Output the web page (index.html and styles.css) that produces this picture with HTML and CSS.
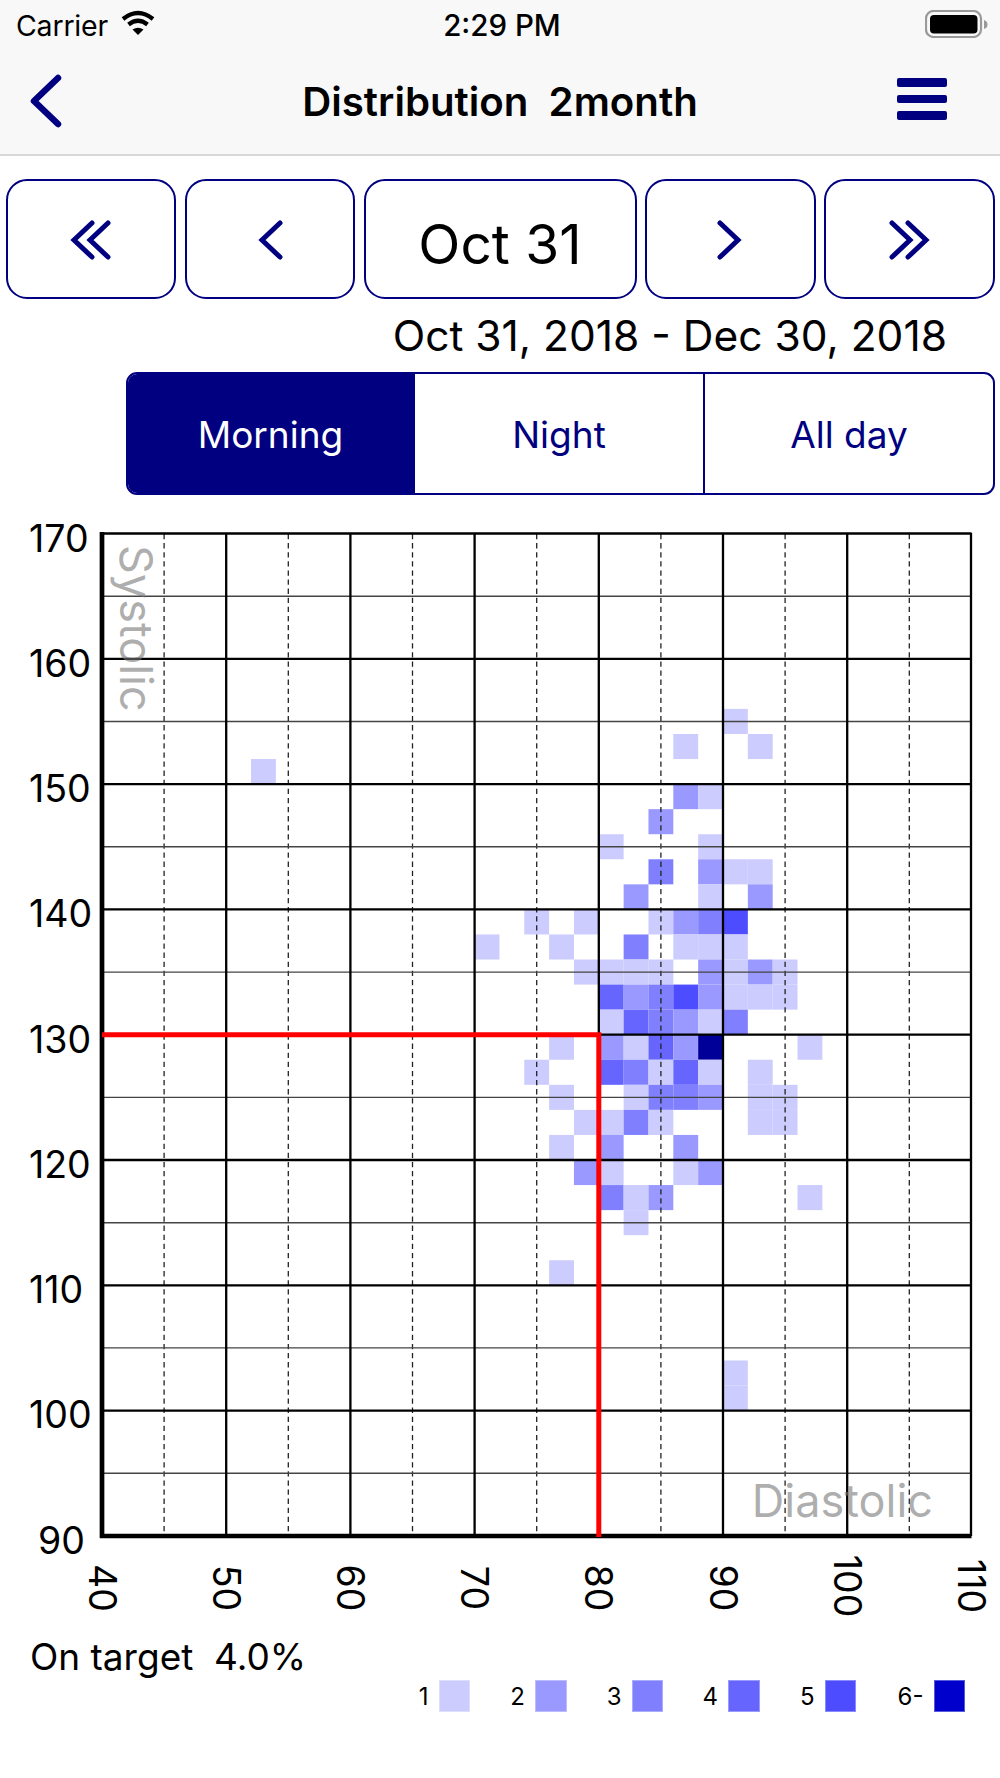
FILE: index.html
```html
<!DOCTYPE html>
<html lang="en">
<head>
<meta charset="utf-8">
<title>Distribution 2month</title>
<link rel="stylesheet" href="styles.css">
</head>
<body>
<header class="top">
  <div class="status">
    <div class="status-left">
      <span class="carrier">Carrier</span>
      <svg class="wifi" viewBox="0 0 36 26" width="36" height="26"><path class="wifi-band" d="M3 9Q18-3 33 9"/><path class="wifi-band" d="M8.5 14.5Q18 7 27.5 14.5"/><path class="wifi-fill" d="M12.5 19.5Q18 16 23.5 19.5L18 25Z"/></svg>
    </div>
    <span class="time">2:29 PM</span>
    <div class="status-right">
      <svg class="battery" viewBox="0 0 64 28" width="64" height="28"><rect class="batt-shell" x="1" y="1" width="55" height="26" rx="7.5"/><rect x="5" y="5" width="47.500" height="18.500" rx="4"/><path class="batt-nub" d="M59 10q3.500 1 3.500 4.500T59 19Z"/></svg>
    </div>
  </div>
  <nav class="nav">
    <svg class="back" viewBox="0 0 36 56" width="36" height="56"><path class="chev-lg" d="M29 5 5 28l24 23"/></svg>
    <h1 class="title">Distribution  2month</h1>
    <div class="menu"><span></span><span></span><span></span></div>
  </nav>
</header>

<div class="pager">
  <button class="pg"><svg viewBox="0 0 44 44" width="44" height="44"><path class="chev" d="M23 5 5 22l18 17M39 5 21 22l18 17"/></svg></button>
  <button class="pg"><svg viewBox="0 0 26 44" width="26" height="44"><path class="chev" d="M23 5 5 22l18 17"/></svg></button>
  <button class="pg pg-date">Oct 31</button>
  <button class="pg"><svg viewBox="0 0 26 44" width="26" height="44"><path class="chev" d="m3 5 18 17L3 39"/></svg></button>
  <button class="pg"><svg viewBox="0 0 44 44" width="44" height="44"><path class="chev" d="m5 5 18 17L5 39M21 5l18 17-18 17"/></svg></button>
</div>

<p class="range">Oct 31, 2018 - Dec 30, 2018</p>

<div class="segments">
  <div class="seg seg-on">Morning</div>
  <div class="seg">Night</div>
  <div class="seg seg-last">All day</div>
</div>

<svg class="chart" viewBox="0 510 1000 1125" width="1000" height="1125">
  <g transform="translate(102 533.5) scale(12.42 12.53)">
    <rect class="c1" x="50" y="14"/>
    <rect class="c1" x="46" y="16"/><rect class="c1" x="52" y="16"/>
    <rect class="c1" x="12" y="18"/>
    <rect class="c2" x="46" y="20"/><rect class="c1" x="48" y="20"/>
    <rect class="c2" x="44" y="22"/>
    <rect class="c1" x="40" y="24"/><rect class="c1" x="48" y="24"/>
    <rect class="c3" x="44" y="26"/><rect class="c2" x="48" y="26"/><rect class="c1" x="50" y="26"/><rect class="c1" x="52" y="26"/>
    <rect class="c2" x="42" y="28"/><rect class="c1" x="48" y="28"/><rect class="c2" x="52" y="28"/>
    <rect class="c1" x="34" y="30"/><rect class="c1" x="38" y="30"/><rect class="c1" x="44" y="30"/><rect class="c2" x="46" y="30"/><rect class="c3" x="48" y="30"/><rect class="c5" x="50" y="30"/>
    <rect class="c1" x="30" y="32"/><rect class="c1" x="36" y="32"/><rect class="c3" x="42" y="32"/><rect class="c1" x="46" y="32"/><rect class="c1" x="48" y="32"/><rect class="c1" x="50" y="32"/>
    <rect class="c1" x="38" y="34"/><rect class="c1" x="40" y="34"/><rect class="c1" x="42" y="34"/><rect class="c1" x="44" y="34"/><rect class="c2" x="48" y="34"/><rect class="c1" x="50" y="34"/><rect class="c2" x="52" y="34"/><rect class="c1" x="54" y="34"/>
    <rect class="c4" x="40" y="36"/><rect class="c2" x="42" y="36"/><rect class="c3" x="44" y="36"/><rect class="c5" x="46" y="36"/><rect class="c2" x="48" y="36"/><rect class="c1" x="50" y="36"/><rect class="c1" x="52" y="36"/><rect class="c1" x="54" y="36"/>
    <rect class="c1" x="40" y="38"/><rect class="c4" x="42" y="38"/><rect class="c3" x="44" y="38"/><rect class="c2" x="46" y="38"/><rect class="c1" x="48" y="38"/><rect class="c3" x="50" y="38"/>
    <rect class="c1" x="36" y="40"/><rect class="c2" x="40" y="40"/><rect class="c1" x="42" y="40"/><rect class="c4" x="44" y="40"/><rect class="c2" x="46" y="40"/><rect class="c6" x="48" y="40"/><rect class="c1" x="56" y="40"/>
    <rect class="c1" x="34" y="42"/><rect class="c4" x="40" y="42"/><rect class="c3" x="42" y="42"/><rect class="c1" x="44" y="42"/><rect class="c4" x="46" y="42"/><rect class="c1" x="48" y="42"/><rect class="c1" x="52" y="42"/>
    <rect class="c1" x="36" y="44"/><rect class="c1" x="42" y="44"/><rect class="c3" x="44" y="44"/><rect class="c3" x="46" y="44"/><rect class="c2" x="48" y="44"/><rect class="c1" x="52" y="44"/><rect class="c1" x="54" y="44"/>
    <rect class="c1" x="38" y="46"/><rect class="c1" x="40" y="46"/><rect class="c3" x="42" y="46"/><rect class="c1" x="44" y="46"/><rect class="c1" x="52" y="46"/><rect class="c1" x="54" y="46"/>
    <rect class="c1" x="36" y="48"/><rect class="c2" x="40" y="48"/><rect class="c2" x="46" y="48"/>
    <rect class="c2" x="38" y="50"/><rect class="c1" x="40" y="50"/><rect class="c1" x="46" y="50"/><rect class="c2" x="48" y="50"/>
    <rect class="c3" x="40" y="52"/><rect class="c1" x="42" y="52"/><rect class="c2" x="44" y="52"/><rect class="c1" x="56" y="52"/>
    <rect class="c1" x="42" y="54"/>
    <rect class="c1" x="36" y="58"/>
    <rect class="c1" x="50" y="66"/><rect class="c1" x="50" y="68"/>
  </g>

  <g class="dashed">
    <path d="M164.100 534V1534M288.300 534V1534M412.500 534V1534M536.700 534V1534M660.900 534V1534M785.100 534V1534M909.300 534V1534"/>
  </g>
  <path class="minor" d="M102 596.200H971M102 721.500H971M102 846.800H971M102 972.100H971M102 1097.400H971M102 1222.700H971M102 1347.900H971M102 1473.200H971"/>
  <path class="major" d="M102 533.500H971.500M102 658.800H971M102 784.100H971M102 909.400H971M102 1034.700H971M102 1160H971M102 1285.300H971M102 1410.600H971"/>
  <path class="major" d="M226.200 533V1536M350.400 533V1536M474.600 533V1536M598.800 533V1536M723 533V1536M847.200 533V1536M971 533V1536"/>
  <path class="axis" d="M102 532V1538M100 1536H971.500"/>
  <path class="target" d="M102 1034.700H598.800V1537"/>

  <text class="axis-name" transform="translate(120 545) rotate(90)">Systolic</text>
  <text class="axis-name" x="933" y="1517" text-anchor="end">Diastolic</text>

  <g class="tick">
    <text x="29" y="552">170</text>
    <text x="29" y="677">160</text>
    <text x="29" y="802">150</text>
    <text x="29" y="927">140</text>
    <text x="29" y="1053">130</text>
    <text x="29" y="1178">120</text>
    <text x="29" y="1303">110</text>
    <text x="29" y="1428">100</text>
    <text x="38" y="1554">90</text>
  </g>
  <g class="tick" text-anchor="middle">
    <text transform="translate(102 1588) rotate(90)" y="13.500">40</text>
    <text transform="translate(226.200 1588) rotate(90)" y="13.500">50</text>
    <text transform="translate(350.400 1588) rotate(90)" y="13.500">60</text>
    <text transform="translate(474.600 1588) rotate(90)" y="13.500">70</text>
    <text transform="translate(598.800 1588) rotate(90)" y="13.500">80</text>
    <text transform="translate(723 1588) rotate(90)" y="13.500">90</text>
    <text transform="translate(847.200 1586) rotate(90)" y="13.500">100</text>
    <text transform="translate(971.400 1586) rotate(90)" y="13.500">110</text>
  </g>
</svg>

<p class="on-target">On target  4.0%</p>
<div class="legend">
  <div class="legend-item"><span>1</span><i class="swatch l1"></i></div>
  <div class="legend-item"><span>2</span><i class="swatch l2"></i></div>
  <div class="legend-item"><span>3</span><i class="swatch l3"></i></div>
  <div class="legend-item"><span>4</span><i class="swatch l4"></i></div>
  <div class="legend-item"><span>5</span><i class="swatch l5"></i></div>
  <div class="legend-item legend-last"><span>6-</span><i class="swatch l6"></i></div>
</div>
</body>
</html>
```

FILE: styles.css
```css
* { box-sizing: border-box; }
html, body { margin: 0; padding: 0; }
body {
  width: 1000px;
  height: 1778px;
  overflow: hidden;
  background: #fff;
  color: #000;
  font-family: Inter, "Noto Sans", "Liberation Sans", sans-serif;
}

/* top bars */
.top { background: #f8f8f8; border-bottom: 2px solid #d8d8d8; height: 156px; }
.status {
  height: 44px;
  padding: 0 12px 0 16px;
  display: grid;
  grid-template-columns: 1fr auto 1fr;
  align-items: center;
}
.status-left { display: flex; align-items: center; gap: 12px; }
.carrier { font-size: 28.500px; letter-spacing: -0.2px; padding-top: 6px; }
.wifi { margin-top: 1px; }
.wifi-band { fill: none; stroke: #000; stroke-width: 4.2; }
.wifi-fill { fill: #000; }
.time { font-size: 29.500px; font-weight: 500; padding-top: 6px; }
.status-right { display: flex; justify-content: flex-end; margin-top: 4px; margin-right: -1px; }
.batt-shell { fill: none; stroke: #999; stroke-width: 2.2; }
.batt-nub { fill: #999; }

.nav {
  height: 110px;
  padding: 0 53px;
  display: grid;
  grid-template-columns: 1fr auto 1fr;
  align-items: center;
}
.back { display: block; margin: 4px 0 0 -24px; }
.chev-lg { fill: none; stroke: #000080; stroke-width: 6.5; stroke-linecap: round; stroke-linejoin: round; }
.title {
  margin: 0;
  padding-top: 7px;
  font-size: 40.200px;
  font-weight: 600;
  white-space: pre;
  line-height: 1;
}
.menu { justify-self: end; display: flex; flex-direction: column; gap: 8px; }
.menu span { display: block; width: 50px; height: 8.500px; background: #000080; border-radius: 2px; }

/* pager */
.pager { display: flex; gap: 8.500px; padding: 23px 5.500px 0; }
.pg {
  flex: 0 0 170.500px;
  height: 120px;
  padding: 0;
  border: 2.500px solid #000080;
  border-radius: 21px;
  background: #fff;
  color: #000;
  font-family: inherit;
  display: flex;
  align-items: center;
  justify-content: center;
}
.pg svg { display: block; margin-top: 2px; }
.chev { fill: none; stroke: #000080; stroke-width: 5; stroke-linecap: round; stroke-linejoin: miter; }
.pg-date { flex: 1 1 auto; font-size: 55px; padding-top: 10px; }

.range {
  margin: 0;
  height: 73px;
  padding: 15px 53px 0 0;
  text-align: right;
  font-size: 42.500px;
  line-height: 44px;
}

/* segmented control */
.segments {
  margin: 0 5px 0 126px;
  height: 123px;
  display: flex;
  border: 2.500px solid #000080;
  border-radius: 11px;
  overflow: hidden;
  color: #000080;
  font-size: 37px;
}
.seg {
  flex: 1 1 0;
  display: flex;
  align-items: center;
  justify-content: center;
  border-right: 2px solid #000080;
  padding-top: 1px;
}
.seg-last { border-right: 0; }
.seg-on { flex: 0 0 287px; background: #000080; color: #fff; }

/* chart */
.chart { display: block; margin-top: 15px; }
.c1, .c2, .c3, .c4, .c5, .c6 { width: 2px; height: 2px; }
.c1 { fill: #ccccff; }
.c2 { fill: #9999ff; }
.c3 { fill: #8080ff; }
.c4 { fill: #6666ff; }
.c5 { fill: #4d4dff; }
.c6 { fill: #000099; }
.dashed path { fill: none; stroke: #222; stroke-width: 1.300; stroke-dasharray: 5.300 3.800; }
.minor { fill: none; stroke: #444; stroke-width: 1.400; }
.major { fill: none; stroke: #000; stroke-width: 2.300; }
.axis { fill: none; stroke: #000; stroke-width: 4.700; }
.target { fill: none; stroke: #ff0000; stroke-width: 5; }
.axis-name { font-size: 45px; fill: rgba(120, 120, 120, 0.6); }
.tick { font-size: 37.500px; fill: #000; }

/* footer */
.on-target {
  margin: 0;
  padding-left: 30px;
  font-size: 37px;
  line-height: 44px;
  white-space: pre;
}
.legend { display: flex; justify-content: flex-end; padding: 1px 35px 0 0; }
.legend-item {
  width: 96.500px;
  display: flex;
  justify-content: flex-end;
  align-items: center;
  gap: 10px;
  font-size: 24px;
}
.legend-last { width: 109px; }
.swatch { display: block; width: 31.500px; height: 32px; border: 1px solid rgba(255, 255, 255, 0.35); }
.l1 { background: #ccccff; }
.l2 { background: #9999ff; }
.l3 { background: #8080ff; }
.l4 { background: #6666ff; }
.l5 { background: #4d4dff; }
.l6 { background: #0000cc; }
```
